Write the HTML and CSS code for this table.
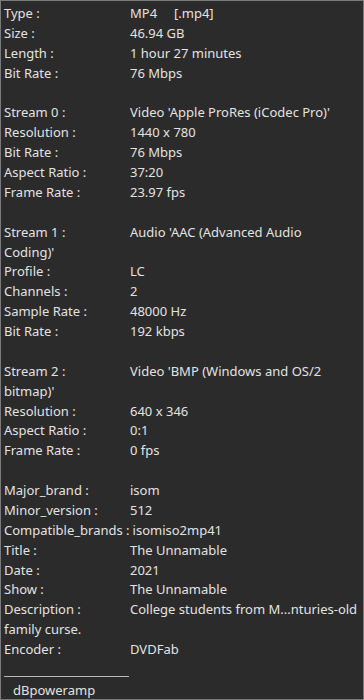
FILE: index.html
```html
<!DOCTYPE html>
<html>
<head>
<meta charset="utf-8">
<link rel="stylesheet" href="styles.css">
</head>
<body>
<div class="panel">
  <div class="info">
    <div class="row"><span class="k">Type :</span>MP4&nbsp;&nbsp;&nbsp;&nbsp; [.mp4]</div>
    <div class="row"><span class="k">Size :</span>46.94 GB</div>
    <div class="row"><span class="k">Length :</span>1 hour 27 minutes</div>
    <div class="row"><span class="k">Bit Rate :</span>76 Mbps</div>
    <div class="row blank"></div>
    <div class="row"><span class="k">Stream 0 :</span>Video 'Apple ProRes (iCodec Pro)'</div>
    <div class="row"><span class="k">Resolution :</span>1440 x 780</div>
    <div class="row"><span class="k">Bit Rate :</span>76 Mbps</div>
    <div class="row"><span class="k">Aspect Ratio :</span>37:20</div>
    <div class="row"><span class="k">Frame Rate :</span>23.97 fps</div>
    <div class="row blank"></div>
    <div class="row"><span class="k">Stream 1 :</span>Audio 'AAC (Advanced Audio<br>Coding)'</div>
    <div class="row"><span class="k">Profile :</span>LC</div>
    <div class="row"><span class="k">Channels :</span>2</div>
    <div class="row"><span class="k">Sample Rate :</span>48000 Hz</div>
    <div class="row"><span class="k">Bit Rate :</span>192 kbps</div>
    <div class="row blank"></div>
    <div class="row"><span class="k">Stream 2 :</span>Video 'BMP (Windows and OS/2<br>bitmap)'</div>
    <div class="row"><span class="k">Resolution :</span>640 x 346</div>
    <div class="row"><span class="k">Aspect Ratio :</span>0:1</div>
    <div class="row"><span class="k">Frame Rate :</span>0 fps</div>
    <div class="row blank"></div>
    <div class="row"><span class="k">Major_brand :</span>isom</div>
    <div class="row"><span class="k">Minor_version :</span>512</div>
    <div class="row"><span class="k wide">Compatible_brands :</span>isomiso2mp41</div>
    <div class="row"><span class="k">Title :</span>The Unnamable</div>
    <div class="row"><span class="k">Date :</span>2021</div>
    <div class="row"><span class="k">Show :</span>The Unnamable</div>
    <div class="row"><span class="k">Description :</span>College students from M...nturies-old<br>family curse.</div>
    <div class="row"><span class="k">Encoder :</span>DVDFab</div>
  </div>
  <div class="sep"></div>
  <div class="footer">dBpoweramp</div>
</div>
</body>
</html>
```
FILE: styles.css
```css
html, body {
  margin: 0;
  padding: 0;
  background: #2b2b2b;
}
.panel {
  box-sizing: border-box;
  width: 364px;
  height: 700px;
  border: 1px solid #7a7a7a;
  background: #2b2b2b;
  color: #e2e2e2;
  font-family: "Noto Sans", "Open Sans", sans-serif;
  font-size: 13px;
  padding: 3px 0 0 3px;
  display: flex;
  flex-direction: column;
}
.info {
  line-height: 19.88px;
}
.row {
  white-space: nowrap;
}
.blank {
  height: 19.88px;
}
.k {
  display: inline-block;
  min-width: 126px;
}
.k.wide {
  min-width: 0;
  margin-right: 3px;
}
.sep {
  margin-top: 16px;
  width: 125px;
  height: 1px;
  background: #b8b8b8;
}
.footer {
  padding-left: 9px;
  line-height: 18px;
  margin-top: 4px;
}
```
